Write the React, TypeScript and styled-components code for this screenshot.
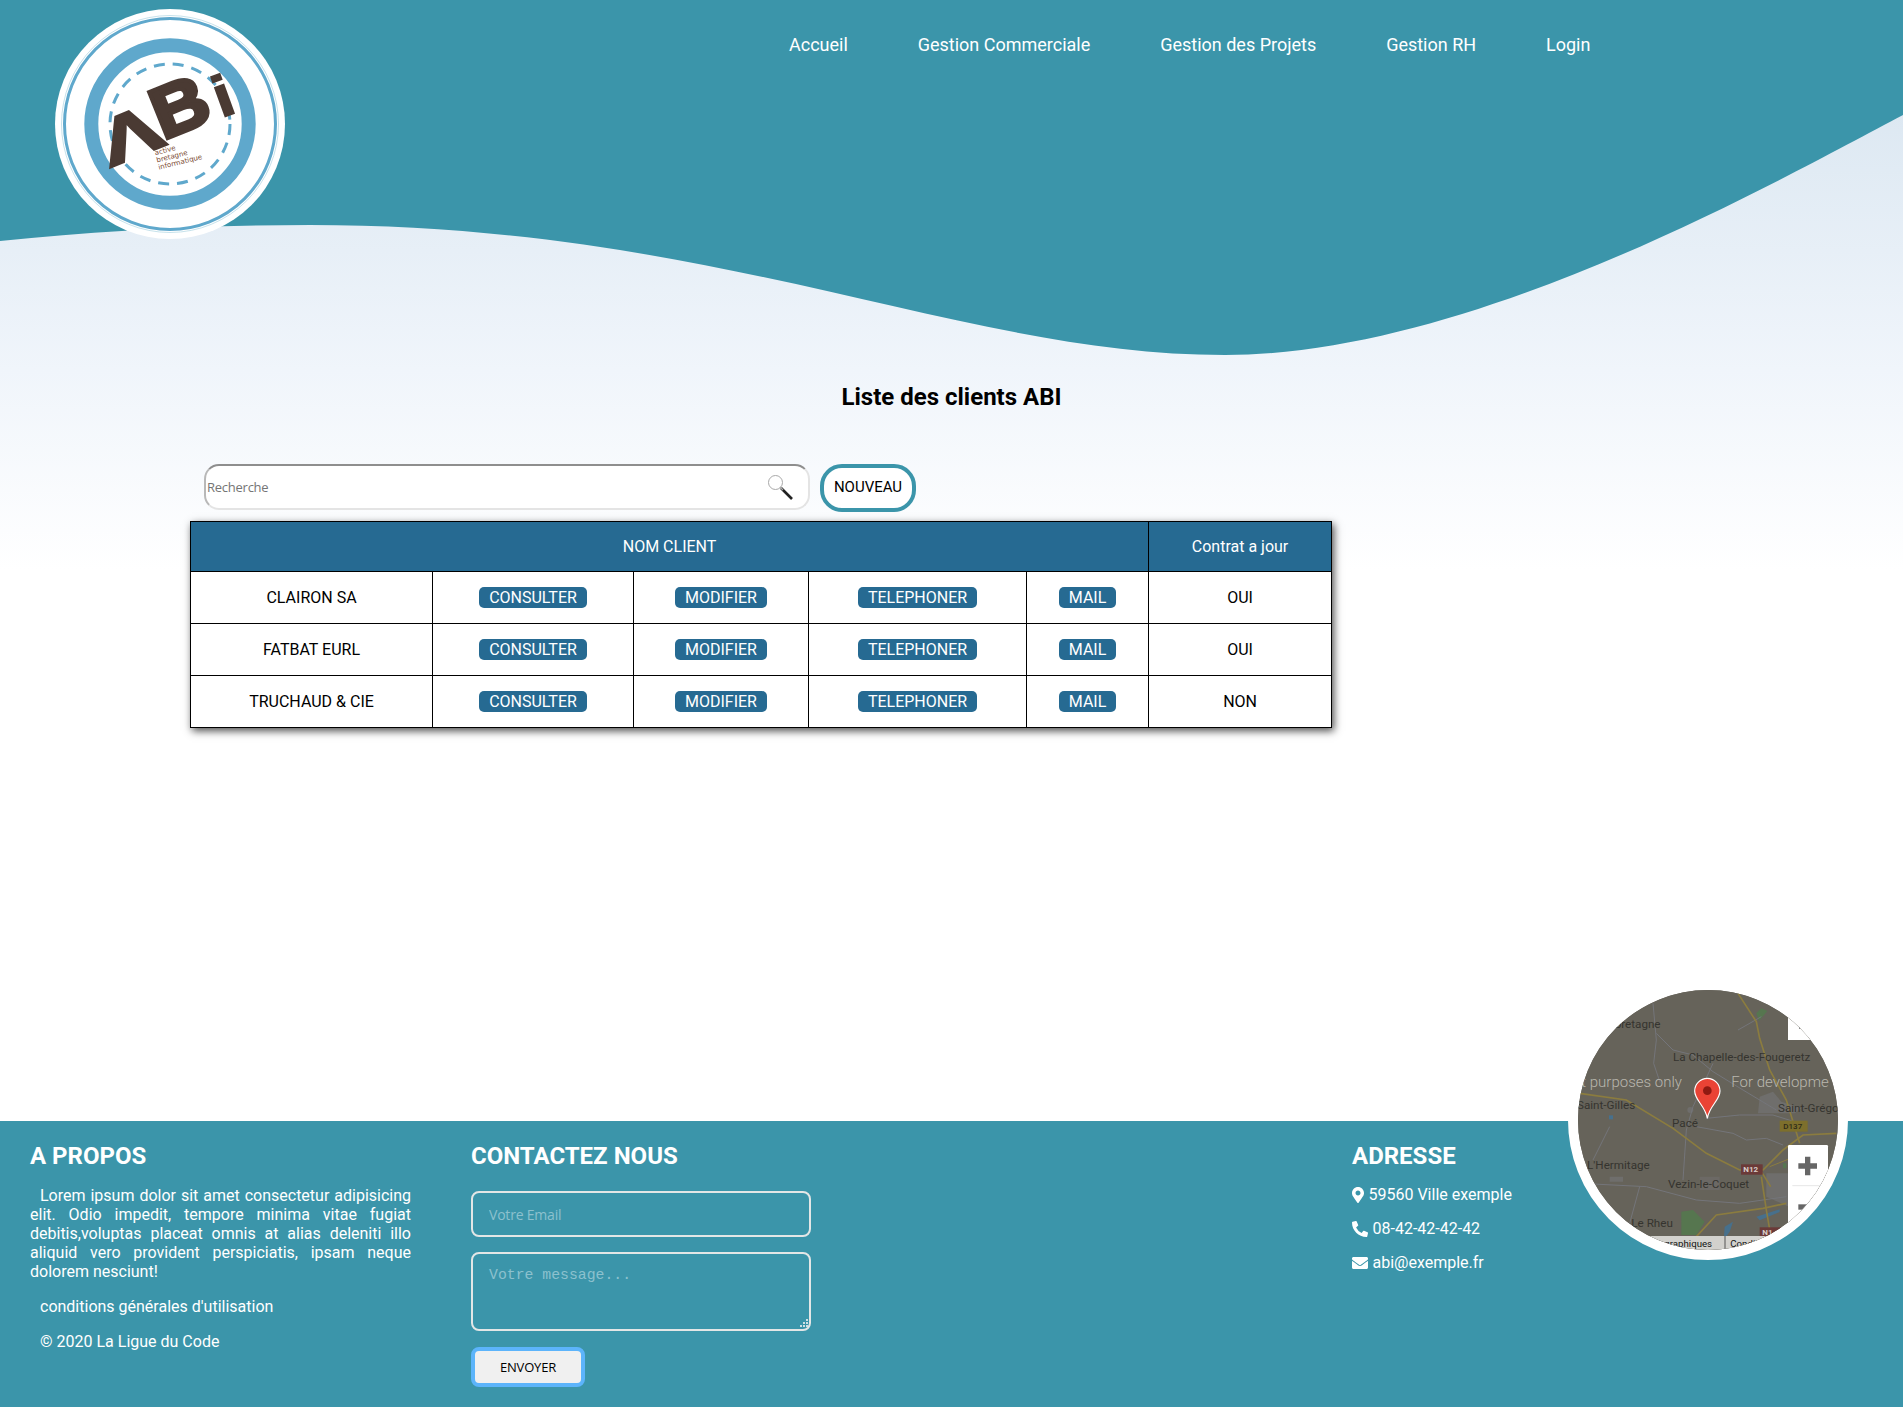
import React from "react";
import styled, { createGlobalStyle } from "styled-components";
import { FaMapMarkerAlt, FaPhoneAlt, FaEnvelope } from "react-icons/fa";

const Global = createGlobalStyle`
  html, body { margin: 0; padding: 0; }
  body { font-family: Roboto, "Liberation Sans", sans-serif; background: #fff; }
  * { box-sizing: border-box; }
`;

const TEAL = "#3b95aa";
const BLUE = "#266a92";

const Page = styled.div`
  width: 1903px;
  height: 1407px;
  display: flex;
  flex-direction: column;
  overflow: hidden;
  background: linear-gradient(180deg, #d8e5f0 50px, #f0f5fb 370px, #fff 570px);
`;
const Hero = styled.header`
  position: relative;
  height: 383px;
  flex: none;
`;
const Wave = styled.svg`
  position: absolute;
  left: 0;
  top: 0;
  width: 1903px;
  height: 383px;
`;
const HeroInner = styled.div`
  position: relative;
  display: flex;
  align-items: flex-start;
  padding: 9px 0 0 55px;
`;
const LogoSvg = styled.svg`
  width: 230px;
  height: 230px;
  flex: none;
  display: block;
`;
const Nav = styled.nav`
  display: flex;
  gap: 69.9px;
  margin: 25px 0 0 504px;
`;
const NavLink = styled.a`
  color: #fff;
  font-size: 18px;
  line-height: 22px;
  white-space: nowrap;
`;
const Main = styled.main`
  flex: 1;
`;
const Title = styled.h2`
  margin: 0 0 53px;
  text-align: center;
  font-size: 24px;
  line-height: 28px;
  font-weight: 700;
  color: #000;
`;
const Toolbar = styled.div`
  display: flex;
  align-items: flex-start;
  gap: 10px;
  margin: 0 0 9px 204px;
`;
const SearchBox = styled.div`
  width: 606px;
  height: 46px;
  background: #fff;
  border: 2px solid #e4e4e4;
  border-top-color: #8e8e8e;
  border-left-color: #b8b8b8;
  border-radius: 15px;
  display: flex;
  align-items: center;
  padding-right: 14px;
`;
const SearchText = styled.span`
  flex: 1;
  font-family: "Open Sans", sans-serif;
  font-size: 13px;
  color: #757575;
  letter-spacing: -0.25px;
  padding-left: 1px;
`;
const SearchIcon = styled.svg`
  width: 28px;
  height: 28px;
  flex: none;
`;
const NewButton = styled.button`
  width: 96px;
  height: 48px;
  padding: 0 0 2px;
  background: #fff;
  border: 4px solid ${TEAL};
  border-radius: 22px;
  font-family: Roboto, sans-serif;
  font-size: 15px;
  color: #000;
`;
const Table = styled.table`
  margin-left: 190px;
  width: 1141px;
  table-layout: fixed;
  border-collapse: collapse;
  background: #fff;
  box-shadow: 2px 3px 8px rgba(0, 0, 0, 0.7);
  font-size: 16px;
`;
const HeadCell = styled.th`
  height: 50px;
  padding: 0;
  background: ${BLUE};
  color: #fff;
  font-weight: 400;
  border: 1px solid #000;
`;
const Cell = styled.td`
  height: 52px;
  padding: 0;
  text-align: center;
  color: #000;
  border: 1px solid #000;
`;
const Pill = styled.a`
  display: inline-block;
  height: 21px;
  line-height: 21px;
  padding: 0 10px;
  border-radius: 5px;
  background: ${BLUE};
  color: #fff;
`;
const Footer = styled.footer`
  position: relative;
  flex: none;
  height: 286px;
  background: ${TEAL};
  color: #fff;
  padding: 21px 0 0 30px;
  display: grid;
  grid-template-columns: 441px 881px 1fr;
`;
const About = styled.section`
  padding-right: 60px;
`;
const FootTitle = styled.h3`
  margin: 0 0 16px;
  font-size: 24px;
  line-height: 28px;
  font-weight: 700;
`;
const AddressTitle = styled(FootTitle)`
  margin-bottom: 15px;
`;
const AboutText = styled.p`
  margin: 0 0 15.5px;
  font-size: 16px;
  line-height: 19.1px;
  text-indent: 10px;
  text-align: justify;
`;
const Form = styled.form`
  width: 340px;
  padding-top: 5px;
  display: flex;
  flex-direction: column;
  align-items: flex-start;
`;
const Email = styled.input`
  width: 100%;
  height: 46px;
  margin: 0 0 15px;
  padding: 0 16px;
  background: transparent;
  border: 2px solid #e3e6e6;
  border-radius: 8px;
  font-family: "Open Sans", sans-serif;
  font-size: 14px;
  letter-spacing: -0.2px;
  &::placeholder { color: #8cc1ce; opacity: 1; }
`;
const MessageWrap = styled.div`
  position: relative;
  width: 100%;
  height: 79px;
  margin: 0 0 16px;
`;
const Message = styled.textarea`
  display: block;
  width: 100%;
  height: 100%;
  padding: 13px 16px;
  resize: none;
  background: transparent;
  border: 2px solid #e3e6e6;
  border-radius: 8px;
  font-family: "Liberation Mono", monospace;
  font-size: 14.8px;
  &::placeholder { color: #8cc1ce; opacity: 1; }
`;
const Grip = styled.svg`
  position: absolute;
  right: 3px;
  bottom: 2px;
  width: 10px;
  height: 10px;
`;
const Send = styled.button`
  width: 114px;
  height: 40px;
  padding: 0;
  background: #f0f0f0;
  border: 4px solid #5cb4fb;
  border-radius: 8px;
  font-family: "Open Sans", sans-serif;
  font-size: 13px;
  letter-spacing: -0.2px;
  color: #000;
`;
const AddressLine = styled.p`
  display: flex;
  align-items: center;
  gap: 4.5px;
  height: 19px;
  margin: 0 0 15px;
  font-size: 16px;
`;
const Marker = styled(FaMapMarkerAlt)`
  width: 12px;
  height: 16px;
  flex: none;
`;
const MapFrame = styled.div`
  position: absolute;
  left: 1568px;
  top: -141px;
  width: 280px;
  height: 280px;
  border: 10px solid #fff;
  border-radius: 50%;
  overflow: hidden;
  background: #66635a;
`;
const MapSvg = styled.svg`
  display: block;
  width: 260px;
  height: 260px;
  font-family: Roboto, sans-serif;
`;

const Logo = () => (
  <LogoSvg viewBox="55 9 230 230">
    <circle cx="170" cy="124" r="115" fill="#fff" />
    <circle cx="170" cy="124" r="108.5" fill="none" stroke="#b9dbe6" strokeWidth="0.8" />
    <circle cx="170" cy="124" r="105.5" fill="none" stroke="#5fa8cc" strokeWidth="3" />
    <circle cx="170" cy="124" r="78.7" fill="none" stroke="#5fa8cc" strokeWidth="14" />
    <circle cx="170" cy="124" r="60" fill="none" stroke="#5fa8cc" strokeWidth="3" strokeDasharray="11 8" />
    <g fill="#4a3a33" stroke="#4a3a33" fontFamily="'Liberation Sans', sans-serif" fontWeight="700">
      <text transform="translate(139 156) rotate(-22) scale(1.42 1)" fontSize="66" textAnchor="middle" strokeWidth="2">Λ</text>
      <text transform="translate(163 140) rotate(-22) scale(1.08 1)" fontSize="72" strokeWidth="4">B</text>
      <text transform="translate(221 118) rotate(-20) scale(1.15 1)" fontSize="58" strokeWidth="1.5">i</text>
    </g>
    <g fontSize="7" fill="#7a4a32" fontFamily="'DejaVu Sans', sans-serif" transform="rotate(-14 157 162)">
      <text x="157" y="155">active</text>
      <text x="157" y="162.5">bretagne</text>
      <text x="157" y="170">informatique</text>
    </g>
  </LogoSvg>
);

const Magnifier = () => (
  <SearchIcon viewBox="0 0 28 28">
    <circle cx="9.5" cy="9.5" r="7" fill="#fff" stroke="#a9a9a9" strokeWidth="1" />
    <line x1="15" y1="15" x2="26" y2="26" stroke="#222" strokeWidth="2.6" />
    <line x1="14" y1="14" x2="17" y2="17" stroke="#aaa" strokeWidth="1.5" />
  </SearchIcon>
);

const MapDrawing = () => (
  <MapSvg viewBox="115 60 780 780">
    <rect x="115" y="60" width="780" height="780" fill="#66635a" />
    <g fill="#6f6e6c">
      <path d="M660 380l40-15 25 30 60 20-20 15h-110z" />
      <path d="M680 610h210v90l-120 20-90-40z" />
      <path d="M480 620h60v40h-60z" opacity=".6" />
      <path d="M210 620h40v15h-40z" />
      <circle cx="452" cy="420" r="9" />
    </g>
    <g fill="#56764f">
      <path d="M650 130l15-15 18 8-25 30z" />
      <path d="M425 725l35-5 35 35-25 40h-45z" />
      <path d="M730 580h10v15h-10z" />
    </g>
    <g fill="#47708c">
      <rect x="208" y="436" width="12" height="12" />
      <path d="M555 770l25-15-10 30-18 25z" />
      <path d="M650 740l70-22v8l-60 25z" />
    </g>
    <g fill="none" stroke="#74757a" strokeWidth="3">
      <path d="M340 100l10 110-8 70 20 60" />
      <path d="M350 190l50 50 60 15 60 50 90 55 100 60" />
      <path d="M520 280l-60 130-20 70-10 150" />
      <path d="M500 445l100-10h100l80 25" />
      <path d="M470 470l110 20 40 20 60-5 50 20" />
      <path d="M120 640l200 10 150 40 130 10 140-20" />
      <path d="M300 650l-30 110-20 40" />
      <path d="M210 470l-50 100" />
      <path d="M595 180l70-40" />
    </g>
    <g fill="none" stroke="#8b7c3f" strokeWidth="5">
      <path d="M595 70l55 85 10 50 30 95 50 90 40 130" />
      <path d="M120 370l140 20 140 85 100 75 100 50h70l60-60 60-45 100-5" />
      <path d="M665 605l28 45" />
      <path d="M665 620l15 100 12 70" />
      <path d="M470 800l60-65 140-20 70-15" />
      <path d="M690 590l100-40" strokeWidth="3" />
    </g>
    <g fill="#35342f" fontSize="35">
      <text x="225" y="174">bretagne</text>
      <text x="400" y="273">La Chapelle-des-Fougeretz</text>
      <text x="112" y="416">Saint-Gilles</text>
      <text x="397" y="471">Pacé</text>
      <text x="715" y="426">Saint-Grégo</text>
      <text x="142" y="597">L'Hermitage</text>
      <text x="385" y="654">Vezin-le-Coquet</text>
      <text x="275" y="771">Le Rheu</text>
    </g>
    <g fill="#b9b7ae" fontSize="45" fontWeight="300">
      <text x="125" y="350">t purposes only</text>
      <text x="575" y="350">For developme</text>
    </g>
    <rect x="720" y="452" width="84" height="33" fill="#7d6f2c" />
    <text x="731" y="477" fill="#2d2a18" fontSize="24" fontWeight="500">D137</text>
    <rect x="604" y="583" width="65" height="31" fill="#6b3a38" />
    <text x="611" y="607" fill="#d8cdc8" fontSize="24" fontWeight="700">N12</text>
    <rect x="660" y="772" width="65" height="31" fill="#6b3a38" />
    <text x="668" y="796" fill="#d8cdc8" fontSize="24" fontWeight="700">N1</text>
    <path d="M503 445c-6-38-38-54-38-82a38 38 0 0 1 76 0c0 28-32 44-38 82z" fill="#ea4335" stroke="#fff" strokeWidth="3.5" />
    <circle cx="503" cy="362" r="13" fill="#8f1a12" />
    <rect x="745" y="100" width="76" height="110" fill="#fff" />
    <path d="M778 170h4v6h-4z" fill="#666" />
    <rect x="745" y="525" width="120" height="280" rx="4" fill="#fff" />
    <path d="M796 560h16v20h20v16h-20v20h-16v-20h-20v-16h20z" fill="#666" />
    <line x1="758" y1="647" x2="865" y2="647" stroke="#e6e6e6" strokeWidth="3" />
    <rect x="776" y="703" width="56" height="16" fill="#666" />
    <rect x="300" y="798" width="400" height="42" fill="#d2d1cd" />
    <line x1="556" y1="798" x2="556" y2="840" stroke="#555" strokeWidth="3" />
    <g fill="#111" fontSize="29">
      <text x="342" y="831">éographiques</text>
      <text x="572" y="831">Conditions</text>
    </g>
  </MapSvg>
);

const rows: [string, string][] = [
  ["CLAIRON SA", "OUI"],
  ["FATBAT EURL", "OUI"],
  ["TRUCHAUD & CIE", "NON"],
];
const widths = [242, 201, 175, 218, 122, 183];

export default function App() {
  return (
    <Page>
      <Global />
      <Hero>
        <Wave viewBox="0 0 1903 383">
          <path
            d="M0 241C100 231 200 225 310 225C720 225 960 355 1225 355C1470 355 1770 185 1903 115V0H0Z"
            fill={TEAL}
          />
        </Wave>
        <HeroInner>
          <Logo />
          <Nav>
            <NavLink>Accueil</NavLink>
            <NavLink>Gestion Commerciale</NavLink>
            <NavLink>Gestion des Projets</NavLink>
            <NavLink>Gestion RH</NavLink>
            <NavLink>Login</NavLink>
          </Nav>
        </HeroInner>
      </Hero>
      <Main>
        <Title>Liste des clients ABI</Title>
        <Toolbar>
          <SearchBox>
            <SearchText>Recherche</SearchText>
            <Magnifier />
          </SearchBox>
          <NewButton>NOUVEAU</NewButton>
        </Toolbar>
        <Table>
          <colgroup>
            {widths.map((w, i) => (
              <col key={i} width={w} />
            ))}
          </colgroup>
          <thead>
            <tr>
              <HeadCell colSpan={5}>NOM CLIENT</HeadCell>
              <HeadCell>Contrat a jour</HeadCell>
            </tr>
          </thead>
          <tbody>
            {rows.map(([name, state]) => (
              <tr key={name}>
                <Cell>{name}</Cell>
                <Cell><Pill>CONSULTER</Pill></Cell>
                <Cell><Pill>MODIFIER</Pill></Cell>
                <Cell><Pill>TELEPHONER</Pill></Cell>
                <Cell><Pill>MAIL</Pill></Cell>
                <Cell>{state}</Cell>
              </tr>
            ))}
          </tbody>
        </Table>
      </Main>
      <Footer>
        <About>
          <FootTitle>A PROPOS</FootTitle>
          <AboutText>
            Lorem ipsum dolor sit amet consectetur adipisicing elit. Odio impedit, tempore minima
            vitae fugiat debitis,voluptas placeat omnis at alias deleniti illo aliquid vero
            provident perspiciatis, ipsam neque dolorem nesciunt!
          </AboutText>
          <AboutText>conditions générales d'utilisation</AboutText>
          <AboutText>© 2020 La Ligue du Code</AboutText>
        </About>
        <section>
          <FootTitle>CONTACTEZ NOUS</FootTitle>
          <Form>
            <Email placeholder="Votre Email" />
            <MessageWrap>
              <Message placeholder="Votre message..." />
              <Grip viewBox="0 0 10 10">
                <path d="M8 0h2v2H8zM5 3h2v2H5zM8 3h2v2H8zM2 6h2v2H2zM5 6h2v2H5zM8 6h2v2H8z" fill="#cfe0e4" />
              </Grip>
            </MessageWrap>
            <Send type="button">ENVOYER</Send>
          </Form>
        </section>
        <section>
          <AddressTitle>ADRESSE</AddressTitle>
          <AddressLine><Marker />59560 Ville exemple</AddressLine>
          <AddressLine><FaPhoneAlt size={16} />08-42-42-42-42</AddressLine>
          <AddressLine><FaEnvelope size={16} />abi@exemple.fr</AddressLine>
        </section>
        <MapFrame>
          <MapDrawing />
        </MapFrame>
      </Footer>
    </Page>
  );
}
